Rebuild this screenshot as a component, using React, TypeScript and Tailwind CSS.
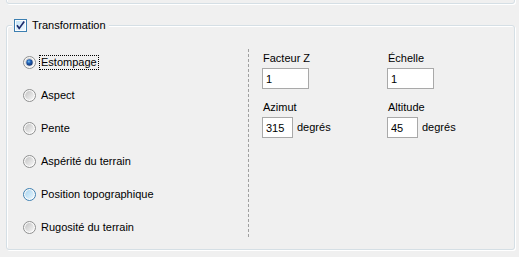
import { useState } from 'react'

type RadioState = 'normal' | 'checked' | 'hover'

function Radio({ state }: { state: RadioState }) {
  const id = `r-${state}`
  const ring = state === 'hover' ? '#3c7fb1' : '#8e8f8f'
  const innerTop = state === 'hover' ? '#a9d5f0' : '#c4c4c4'
  const innerBottom = state === 'hover' ? '#e9f6fd' : '#f7f7f7'
  return (
    <svg width="13" height="13" viewBox="0 0 13 13" className="shrink-0">
      <defs>
        <linearGradient id={`${id}-o`} x1="0" y1="0" x2="1" y2="1">
          <stop offset="0" stopColor="#f4f4f4" />
          <stop offset="1" stopColor="#ffffff" />
        </linearGradient>
        <linearGradient id={`${id}-i`} x1="0" y1="0" x2="1" y2="1">
          <stop offset="0" stopColor={innerTop} />
          <stop offset="1" stopColor={innerBottom} />
        </linearGradient>
        <radialGradient id={`${id}-d`} cx="0.4" cy="0.35" r="0.7">
          <stop offset="0" stopColor="#7cc4f0" />
          <stop offset="0.4" stopColor="#1f5fb5" />
          <stop offset="1" stopColor="#14306a" />
        </radialGradient>
      </defs>
      <circle cx="6.5" cy="6.5" r="6" fill={`url(#${id}-o)`} stroke={ring} strokeWidth="1" />
      <circle cx="6.5" cy="6.5" r="4.4" fill={`url(#${id}-i)`} />
      {state === 'checked' && <circle cx="6.5" cy="6.5" r="3.2" fill={`url(#${id}-d)`} />}
    </svg>
  )
}

function CheckBox() {
  return (
    <svg width="13" height="13" viewBox="0 0 13 13" className="shrink-0">
      <defs>
        <linearGradient id="cb-i" x1="0" y1="0" x2="1" y2="1">
          <stop offset="0" stopColor="#c6e4f7" />
          <stop offset="1" stopColor="#eef8fe" />
        </linearGradient>
      </defs>
      <rect x="0.5" y="0.5" width="12" height="12" fill="#fdfdfd" stroke="#3c7fb1" />
      <rect x="2" y="2" width="9" height="9" fill="url(#cb-i)" />
      <path d="M3 6.2 L5.2 9.4 L10.2 2.6" fill="none" stroke="#1c2a6b" strokeWidth="1.7" />
    </svg>
  )
}

const options: { label: string; state: RadioState }[] = [
  { label: 'Estompage', state: 'checked' },
  { label: 'Aspect', state: 'normal' },
  { label: 'Pente', state: 'normal' },
  { label: 'Aspérité du terrain', state: 'normal' },
  { label: 'Position topographique', state: 'hover' },
  { label: 'Rugosité du terrain', state: 'normal' },
]

function Field({ label, value, wide, unit }: { label: string; value: string; wide?: boolean; unit?: string }) {
  return (
    <div className="flex flex-col">
      <span className="pl-[1px] leading-[13px]">{label}</span>
      <div className="mt-[3px] flex items-center">
        <input
          defaultValue={value}
          className={`h-[21px] ${wide ? 'w-[47px]' : 'w-[31px]'} border border-[#a9a9a9] bg-white px-[3px] text-[11px] leading-[13px] outline-none`}
        />
        {unit && <span className="ml-[4px] leading-[13px]">{unit}</span>}
      </div>
    </div>
  )
}

const etched = 'border border-[#d5dfe5] rounded-[3px] shadow-[1px_1px_0_#ffffff,inset_1px_1px_0_#ffffff]'

export default function App() {
  const [selected] = useState('Estompage')

  return (
    <div className="w-[519px] h-[257px] overflow-hidden bg-[#f0f0f0] font-['Liberation_Sans',Arial,sans-serif] text-[11px] text-black">
      <div className={`ml-[6px] mt-[-10px] h-[14px] w-[509px] ${etched}`} />

      <div className={`relative ml-[6px] mt-[21px] h-[225px] w-[509px] ${etched}`}>
        <div className="absolute left-[5px] top-[-8px] flex items-center bg-[#f0f0f0] pl-[2px] pr-[3px]">
          <CheckBox />
          <span className="ml-[5px] leading-[14px]">Transformation</span>
        </div>

        <div className="flex">
          <div className="w-[241px] pl-[16px] pt-[20px]">
            {options.map((o) => (
              <div key={o.label} className="flex h-[33px] items-center">
                <Radio state={o.state} />
                <span
                  className={`ml-[3px] border px-[1px] leading-[13px] ${
                    o.label === selected ? 'border-dotted border-black' : 'border-transparent'
                  }`}
                >
                  {o.label}
                </span>
              </div>
            ))}
          </div>

          <div className="mt-[23px] h-[188px] border-l border-dashed border-[#a0a0a0]" />

          <div className="pl-[13px] pt-[26px]">
            <div className="grid grid-cols-[125px_auto] gap-y-[12px]">
              <Field label="Facteur Z" value="1" wide />
              <Field label="Échelle" value="1" wide />
              <Field label="Azimut" value="315" unit="degrés" />
              <Field label="Altitude" value="45" unit="degrés" />
            </div>
          </div>
        </div>
      </div>
    </div>
  )
}
